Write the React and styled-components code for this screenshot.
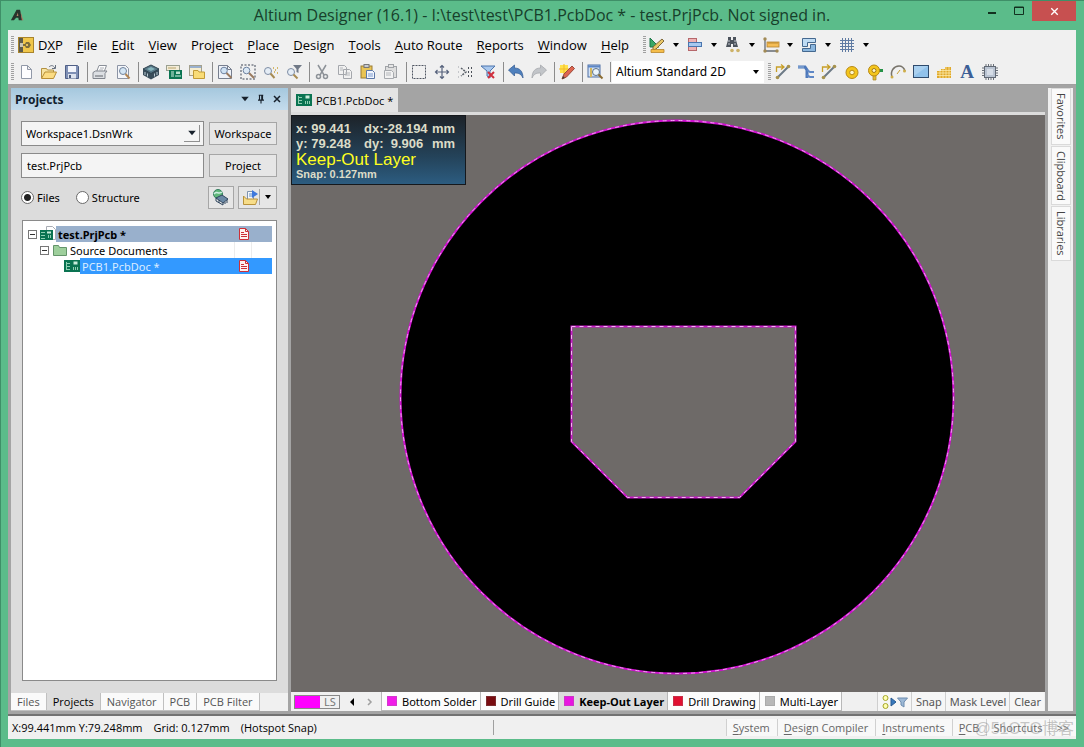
import React, { useState } from "react";
import styled, { createGlobalStyle } from "styled-components";

const ICONS = {
  logo: (
    <>
      <path d="M1 14 7.500 2h4L14 14h-4l-.5-3H7l-2.500 3z" fill="#27332c" />
      <path d="M7.500 9h2L9 5.500z" fill="#b9826a" />
      <path d="M12 4l3 10h-1.500z" fill="#b9705c" />
    </>
  ),
  dxp: (
    <>
      <rect x=".5" y=".5" width="15" height="15" fill="#f0c64a" stroke="#a8842b" />
      <rect x="1" y="1" width="4" height="14" fill="#5d5b4c" />
      <path d="M5 7h2l1-2h3l2 3-2 3H8l-1-2H5z" fill="#7d6d3c" />
      <path d="M2 6h3v4H2z" fill="#c9c5b3" />
      <path d="M8 7h2v2H8z" fill="#e4c25a" />
    </>
  ),
  file: <path d="M3.500 1.500h6l4 4v9h-10zM9.500 1.500v4h4" fill="#fdfdff" stroke="#9199a8" />,
  open: (
    <>
      <path d="M.5 14V4.500h5l1 1.500h6v3" fill="#f6e3a0" stroke="#b39142" />
      <path d="M.5 14.500 4 8h11.500l-3 6.500z" fill="#fbdc83" stroke="#b98f35" />
      <path d="M8 3c2-2 4-2 6 1M14.500 1v3.500H11" fill="none" stroke="#66707f" />
    </>
  ),
  save: (
    <>
      <path d="M1.500 1.500h12l1 1v12h-13z" fill="#7f90b5" stroke="#4f5f86" />
      <rect x="4" y="2" width="8" height="6" fill="#f3f5fb" />
      <rect x="4" y="10" width="8" height="4.500" fill="#dde3ee" />
      <rect x="5" y="11" width="2" height="3" fill="#4d5d80" />
    </>
  ),
  print: (
    <>
      <path d="M4.500 8 7 1.500h7.500L12 8" fill="#fff" stroke="#8a8f98" />
      <path d="M1 8.500 3.500 7h11.500l-2 2.500v5H1z" fill="#dcdfe3" stroke="#80858d" />
      <path d="M3 12h8" stroke="#61656b" />
      <path d="M8 4h4M7 6h4" stroke="#a9adb4" />
    </>
  ),
  preview: (
    <>
      <path d="M2.500 1.500h8l3 3v10h-11z" fill="#f4f6fa" stroke="#8c94a5" />
      <circle cx="8" cy="7" r="3.500" fill="#d4e6f5" stroke="#71839b" />
      <path d="m10.500 10 4 4.500" stroke="#b28654" strokeWidth="2" />
    </>
  ),
  stack: (
    <>
      <path d="M0 5v6l8 4.500L16 11V5z" fill="#3a4d5a" />
      <path d="M8 1 0 5l8 4.500L16 5z" fill="#587887" stroke="#2f434f" />
      <path d="m8 3-4 2 4 2 4-2z" fill="#86b5bd" />
      <path d="M2 8v3M4.500 9.500v3M11.500 9.500v3M14 8v3" stroke="#b9cbd2" />
    </>
  ),
  board: (
    <>
      <rect x=".5" y="1.500" width="13" height="5" fill="#f3ecd7" stroke="#9aa090" />
      <path d="M2 4h8" stroke="#b7a36a" />
      <rect x="3" y="6" width="13" height="9" fill="#0b7553" />
      <path d="M5 8h3M5 10h3M5 12h3M10 13v-2M12 13v-2M14 13v-2" stroke="#d2f0e2" />
      <rect x="10" y="7.500" width="4" height="2.500" fill="#b8e2cf" />
    </>
  ),
  folders: (
    <>
      <rect x=".5" y="1.500" width="12" height="10" fill="#f6edcf" stroke="#a3a08e" />
      <path d="M1 3h11" stroke="#9ab1ce" strokeWidth="2" />
      <path d="M4.500 14.500v-8H9l1 1.500h5.500v6.500z" fill="#f9dc77" stroke="#c29b36" />
    </>
  ),
  fit: (
    <>
      <path d="M1.500 1.500h9l4 4v9h-13z" fill="#eef2f9" stroke="#777f8f" />
      <path d="M10.500 1.500v4h4" fill="none" stroke="#777f8f" />
      <circle cx="7" cy="6.500" r="3.300" fill="#cfe2f4" stroke="#6f83a1" />
      <path d="m9.500 9 5 5" stroke="#9a7b60" strokeWidth="2" />
    </>
  ),
  area: (
    <>
      <rect x="1" y="1" width="14" height="14" fill="none" stroke="#3f4656" strokeDasharray="2 1.500" />
      <circle cx="6.500" cy="6.500" r="3.300" fill="#dbe8f5" stroke="#6f83a1" />
      <path d="m9 9 5 5" stroke="#9a7b60" strokeWidth="2" />
    </>
  ),
  point: (
    <>
      <circle cx="5" cy="7" r="3.500" fill="#e5edf6" stroke="#7d8ca4" />
      <path d="m7.500 9.500 4 4.500" stroke="#a78b52" strokeWidth="2" />
      <path d="M10 4h1M14 4h1M12 6h1M14 9h1M11 8h1" stroke="#c8a23c" strokeWidth="1.500" />
    </>
  ),
  zoomFilter: (
    <>
      <circle cx="5" cy="8" r="3.500" fill="#e5edf6" stroke="#7d8ca4" />
      <path d="m7.500 10.500 4 4" stroke="#a78b52" strokeWidth="2" />
      <path d="M7 1h9l-3.500 4v4l-2-1V5z" fill="#707987" />
    </>
  ),
  cut: (
    <>
      <path d="m4 1 6 10M12 1 6 11" stroke="#8d9298" strokeWidth="1.500" />
      <circle cx="4.500" cy="12.500" r="2" fill="none" stroke="#8d9298" strokeWidth="1.500" />
      <circle cx="11.500" cy="12.500" r="2" fill="none" stroke="#8d9298" strokeWidth="1.500" />
    </>
  ),
  copy: (
    <>
      <path d="M1.500 1.500h6l2 2v7h-8zM6.500 5.500h6l2 2v7h-8z" fill="#f1f1f1" stroke="#a4a7ac" />
      <path d="M3 4h3M3 6h3M8 9h5M8 11h5" stroke="#b4b7bb" />
    </>
  ),
  paste: (
    <>
      <rect x="1" y="2" width="11" height="12" fill="#e9c455" stroke="#9b7c32" />
      <rect x="4" y=".5" width="5" height="3" fill="#c9cbd0" stroke="#777" />
      <path d="M6.500 6.500h6l2 2v6h-8z" fill="#f2f6fd" stroke="#5c78a8" />
      <path d="M8 10h5M8 12h5" stroke="#7c9bcf" />
    </>
  ),
  pasteGrey: (
    <>
      <rect x="2.500" y="2.500" width="11" height="11" fill="#dedede" stroke="#a0a3a7" />
      <rect x="5.500" y=".5" width="5" height="3" fill="#e6e6e6" stroke="#a0a3a7" />
      <path d="M1.500 6.500h7l2 2v6h-9z" fill="#f2f2f2" stroke="#a7aaae" />
      <path d="M3 9h5M3 11h5" stroke="#b4b7bb" />
    </>
  ),
  select: <rect x="1.500" y="1.500" width="13" height="13" fill="none" stroke="#505763" strokeDasharray="2 1" />,
  move: (
    <path
      d="M8 1v14M1 8h14M6 3.500 8 1.500l2 2M6 12.500l2 2 2-2M3.500 6 1.500 8l2 2M12.500 6l2 2-2 2"
      fill="none"
      stroke="#56627c"
      strokeWidth="1.200"
    />
  ),
  deselect: (
    <>
      <path d="M4 4l5 4-5 4" fill="none" stroke="#5a6069" strokeWidth="1.500" strokeDasharray="2 1" />
      <path d="M1 3h1M1 8h1M1 13h1" stroke="#9a9ea5" />
      <path d="M11 4h1M14 4h1M11 8h1M14 8h1M11 12h1M14 12h1" stroke="#4a5058" strokeWidth="2" />
    </>
  ),
  clear: (
    <>
      <path d="M1 2h14l-5 5v7l-3-2V7z" fill="#a9c8ee" stroke="#4d75ad" />
      <path d="m8 8 6 6M14 8l-6 6" stroke="#cf2f3d" strokeWidth="2" />
    </>
  ),
  undo: <path d="M.5 6 6.500 1v3c5 0 8.500 3 8.500 10-2-4-4-5-8.500-5v3z" fill="#4f80bd" stroke="#31588f" strokeWidth=".7" />,
  redo: <path d="M15.500 6 9.500 1v3C4.500 4 1 7 1 14c2-4 4-5 8.500-5v3z" fill="#c2c5c9" stroke="#9fa2a6" strokeWidth=".7" />,
  wand: (
    <>
      <path d="M1 1h8v8H1z" fill="#ffe24a" />
      <path d="M5 0v10M0 5h10" stroke="#f3b928" />
      <path d="m3 15 2-5 8-8 2.500 2.500L7.500 13z" fill="#dd6550" stroke="#9b4c3d" />
      <path d="m3 15 1-3 2 2z" fill="#463b34" />
    </>
  ),
  browse: (
    <>
      <rect x="1" y="1" width="12" height="12" fill="#d3e3f7" stroke="#4e6fa3" />
      <path d="M1 2.500h12" stroke="#5d86c5" strokeWidth="2" />
      <path d="M4 4v9" stroke="#d4b85f" strokeWidth="2" />
      <circle cx="9" cy="8" r="3.500" fill="#eaf4fc" stroke="#5f7286" />
      <path d="m11.500 10.500 4 4" stroke="#8a6b31" strokeWidth="2" />
    </>
  ),
  route: (
    <>
      <path d="M1.500 8V3H8M6 .5 9 3 6 5.500" fill="none" stroke="#c79f27" strokeWidth="1.300" />
      <path d="m2 14 12-12" stroke="#6d7a86" strokeWidth="2" />
      <circle cx="2.500" cy="13.500" r="1.800" fill="#a7934e" />
      <circle cx="13.500" cy="2.500" r="1.800" fill="#a7934e" />
    </>
  ),
  diff: (
    <>
      <path d="M0 3h7l2 3v8" fill="none" stroke="#4d78ba" strokeWidth="3" />
      <path d="M9 6l3 2h4M9 11l3 2h4" fill="none" stroke="#5f88c6" strokeWidth="2" />
      <path d="M0 3h6" stroke="#9ab9df" />
    </>
  ),
  pad: (
    <>
      <circle cx="8" cy="8.500" r="6" fill="#f4c51c" stroke="#b78916" />
      <circle cx="8" cy="8.500" r="2.300" fill="#fff6cb" stroke="#b78916" />
    </>
  ),
  via: (
    <>
      <path d="M6 10h3v6H6z" fill="#e4bd32" stroke="#a98420" strokeWidth=".7" />
      <path d="M11 5h5v3h-5z" fill="#259247" />
      <circle cx="7" cy="6.500" r="5.500" fill="#f4c51c" stroke="#b78916" />
      <circle cx="7" cy="6.500" r="2" fill="#fff6cb" stroke="#a37b12" />
    </>
  ),
  arc: (
    <>
      <path d="M2 13C0 7 4 2 9 2c3 0 5 2 6 5" fill="none" stroke="#77736a" strokeWidth="1.500" />
      <path d="m7 10 3-4" stroke="#c69f36" />
      <circle cx="2" cy="13" r="1.500" fill="#cfae4a" />
      <circle cx="14.500" cy="7" r="1.500" fill="#cfae4a" />
    </>
  ),
  fill: (
    <>
      <rect x=".5" y="1.500" width="15" height="12" fill="#91c2eb" stroke="#2f4b6d" />
      <path d="M1 2h14L1 12z" fill="#a9d0f0" />
    </>
  ),
  polygon: (
    <>
      <path d="M1 7h4V5h4V3h6v11H1z" fill="#e0a92c" />
      <path d="M1 9h14M1 11.500h14M5 6.500h10M4 5v9M7 5v9M10 3v11M13 3v11" stroke="#fff0b6" strokeWidth=".7" />
    </>
  ),
  text: (
    <text x="8" y="14" textAnchor="middle" fontFamily="Liberation Serif, serif" fontSize="19" fontWeight="bold" fill="#3c5f96">
      A
    </text>
  ),
  chip: (
    <>
      <path d="M4 0v16M6.500 0v16M9 0v16M11.500 0v16M0 4h16M0 6.500h16M0 9h16M0 11.500h16" stroke="#6a7079" />
      <rect x="2.500" y="2.500" width="11" height="11" fill="#bac4d2" stroke="#616975" />
      <rect x="5" y="5" width="6" height="6" fill="#d6dde7" />
    </>
  ),
  draft: (
    <>
      <path d="M1 1v9h9z" fill="#3aa767" stroke="#1d7748" />
      <path d="m4 10 9-8 2 2-8 8-3 1z" fill="#e9c767" stroke="#80693a" />
      <path d="M2 12.500h13v3H2z" fill="#f5bd49" stroke="#b6842a" strokeWidth=".8" />
    </>
  ),
  align: (
    <>
      <rect x="1.500" y="1.500" width="8" height="4" fill="#efb2b4" stroke="#b6676b" />
      <rect x="1.500" y="9.500" width="8" height="4" fill="#efb2b4" stroke="#b6676b" />
      <rect x="1.500" y="5.500" width="13" height="4" fill="#a9c9ef" stroke="#4a76af" />
    </>
  ),
  binoculars: (
    <>
      <path d="M3 0h3v3h2V0h3v3l2 7H8V7H6v3H1l2-7z" fill="#4c535c" />
      <path d="M3 4h2M9 4h2M3 7h2M9 7h2" stroke="#c3c9d0" />
      <circle cx="7" cy="13.500" r="1.800" fill="#cdb268" />
      <circle cx="13" cy="13.500" r="1.800" fill="#cdb268" />
    </>
  ),
  dimension: (
    <>
      <path d="M2 2v12h12" fill="none" stroke="#666b72" strokeWidth="1.300" />
      <rect x="4" y="5" width="12" height="5" fill="#f5bd55" stroke="#b5822c" strokeWidth=".8" />
      <path d="M6 5v2M8 5v2M10 5v2M12 5v2M14 5v2" stroke="#a8751f" strokeWidth=".7" />
      <circle cx="2" cy="2" r="1.700" fill="#a18a55" />
      <circle cx="2" cy="14" r="1.700" fill="#a18a55" />
      <circle cx="14" cy="14" r="1.700" fill="#a18a55" />
    </>
  ),
  room: (
    <>
      <path d="M1.500 1.500h13v4h-8v4h-5z" fill="#bfdcf4" stroke="#44688f" />
      <path d="M1.500 11.500v3h13v-7h-5v4z" fill="#8bb7df" stroke="#44688f" />
    </>
  ),
  grid: <path d="M3.500 1v14M6.500 1v14M9.500 1v14M12.500 1v14M1 3.500h14M1 6.500h14M1 9.500h14M1 12.500h14" stroke="#5f7ba3" />,
  pcb: (
    <>
      <rect x="0" y="2" width="16" height="12" fill="#0a7351" />
      <path d="M2.500 4v8M2 5.500h4M2 8.500h4M2 11.500h4M9.500 12V9M11.500 12V9M13.500 12V9" stroke="#8fcfb2" />
      <rect x="9.500" y="3.500" width="4" height="3" fill="#c8ecda" />
    </>
  ),
  project: (
    <>
      <path d="M6.500.5h6l3 3v10h-9z" fill="#fff" stroke="#a8acb4" />
      <rect x="0" y="4" width="13" height="10" fill="#0a7351" />
      <path d="M1 6.500h4M1 9.500h4M1 12.500h4M8.500 12V9M10.500 12V9" stroke="#8fcfb2" />
      <rect x="7" y="5.500" width="4" height="2" fill="#c8ecda" />
    </>
  ),
  folder: <path d="M1.500 13.500v-10h5l1 2h7v8z" fill="#9ecf9c" stroke="#64946a" />,
  doc: (
    <>
      <path d="M3.500 2.500h6l3 3v8h-9z" fill="#fff2f0" stroke="#cc3038" />
      <path d="M9.500 2.500v3h3M5 6.500h3M5 8.500h6M5 10.500h6" fill="none" stroke="#cc3038" />
    </>
  ),
  compile: (
    <>
      <circle cx="5" cy="5" r="4.500" fill="#61b87a" stroke="#367e61" />
      <path d="M1 5c3-4 4 1 8-2" fill="none" stroke="#d1f0e4" strokeWidth="1.500" />
      <path d="m3 9 6-3 6 4-5 4z" fill="#6b89a5" stroke="#31475f" />
      <path d="M3 9v3l7 4v-2M12 13v2M14 11v3M6 11v3" fill="none" stroke="#31475f" />
    </>
  ),
  explore: (
    <>
      <path d="M4.500 12V2.500h6V12" fill="#f6f7fa" stroke="#7e94af" />
      <path d="M6 5h4M6 7h4" stroke="#5c8fcc" />
      <path d="M9 1l6 4-6 4z" fill="#3e78dd" />
      <path d="M.5 15.500V7l3 3h11l-2 5.500z" fill="#f7dd89" stroke="#b8923c" />
    </>
  ),
  down: <path d="M5 6h6l-3 4z" fill="#000" />,
  menuDown: <path d="M3 5h10l-5 6z" fill="#17202b" />,
  pin: <path d="M5 3h6M6 3v6M10 3v6M9 3v6M4 9.500h8M8 10v4" stroke="#17202b" strokeWidth="1.500" />,
  cross: <path d="m4 4 8 8M12 4l-8 8" stroke="#17202b" strokeWidth="2" />,
  whiteCross: <path d="m4 4 8 8M12 4l-8 8" stroke="#fff" strokeWidth="1.700" />,
  minimize: <path d="M4 10h8" stroke="#12301f" strokeWidth="2" />,
  maximize: <path d="M3.500 4h9v7.500h-9zM3 4.500h10" fill="none" stroke="#12301f" />,
  left: <path d="M10 4v8L6 8z" fill="#000" />,
  right: <path d="M7 5l3 3-3 3" fill="none" stroke="#a0a0a0" strokeWidth="1.500" />,
};

const Icon = ({ name, size = 16 }) => (
  <svg width={size} height={size} viewBox="0 0 16 16" aria-hidden="true">
    {ICONS[name]}
  </svg>
);

const MaskGlyph = () => (
  <svg width="26" height="16" viewBox="0 0 26 16" aria-hidden="true">
    <circle cx="3.500" cy="4" r="2.500" fill="#ffffb0" stroke="#a5a52c" />
    <circle cx="3.500" cy="12" r="2.500" fill="#ffffb0" stroke="#a5a52c" />
    <path d="M9 4l5 4-5 4z" fill="#3879bd" stroke="#285b91" />
    <path d="M15.500 4h10l-3.500 4v5l-3-2V8z" fill="#9db9d6" stroke="#6d8caf" />
  </svg>
);

const MENUS = [
  ["", "F", "ile"],
  ["", "E", "dit"],
  ["", "V", "iew"],
  ["Proje", "c", "t"],
  ["", "P", "lace"],
  ["", "D", "esign"],
  ["", "T", "ools"],
  ["", "A", "uto Route"],
  ["", "R", "eports"],
  ["", "W", "indow"],
  ["", "H", "elp"],
];

const DROPDOWNS = ["draft", "align", "binoculars", "dimension", "room", "grid"];

const TOOL_GROUPS = [
  ["file", "open", "save"],
  ["print", "preview"],
  ["stack", "board", "folders"],
  ["fit", "area", "point", "zoomFilter"],
  ["cut", "copy", "paste", "pasteGrey"],
  ["select", "move", "deselect", "clear"],
  ["undo", "redo"],
  ["wand"],
  ["browse"],
];

const PLACE_TOOLS = ["route", "diff", "route", "pad", "via", "arc", "fill", "polygon", "text", "chip"];

const PANEL_TABS = ["Files", "Projects", "Navigator", "PCB", "PCB Filter"];

const LAYERS = [
  { name: "Bottom Solder", color: "#f01ce8" },
  { name: "Drill Guide", color: "#780c10" },
  { name: "Keep-Out Layer", color: "#e815e0" },
  { name: "Drill Drawing", color: "#e01030" },
  { name: "Multi-Layer", color: "#b8b8b8" },
];

const STATUS_MENUS = [
  ["S", "ystem"],
  ["D", "esign Compiler"],
  ["I", "nstruments"],
  ["P", "CB"],
  ["", "Shortcuts"],
  ["", ">>"],
];

const App = () => {
  const [view, setView] = useState("files");
  const [panelTab, setPanelTab] = useState("Projects");
  const [layer, setLayer] = useState("Keep-Out Layer");

  return (
    <Window>
      <GlobalStyle />
      <TitleBar>
        <Logo>
          <Icon name="logo" size={14} />
        </Logo>
        <Title>Altium Designer (16.1) - I:\test\test\PCB1.PcbDoc * - test.PrjPcb. Not signed in.</Title>
        <WindowButtons>
          <WindowButton aria-label="Minimize">
            <Icon name="minimize" />
          </WindowButton>
          <WindowButton aria-label="Maximize">
            <Icon name="maximize" />
          </WindowButton>
          <CloseButton aria-label="Close">
            <Icon name="whiteCross" size={13} />
          </CloseButton>
        </WindowButtons>
      </TitleBar>

      <Client>
        <MenuBar>
          <Grip />
          <DxpButton>
            <Icon name="dxp" />
            <span>
              D<u>X</u>P
            </span>
          </DxpButton>
          <Menus>
            {MENUS.map(([before, key, after]) => (
              <MenuButton key={before + key + after}>
                {before}
                <u>{key}</u>
                {after}
              </MenuButton>
            ))}
          </Menus>
          <Grip />
          {DROPDOWNS.map((name) => (
            <DropButton key={name} aria-label={name}>
              <Icon name={name} />
              <Icon name="down" />
            </DropButton>
          ))}
        </MenuBar>

        <ToolBar>
          <Grip />
          {TOOL_GROUPS.map((group) => (
            <ToolGroup key={group[0]}>
              {group.map((name) => (
                <ToolButton key={name} aria-label={name}>
                  <Icon name={name} />
                </ToolButton>
              ))}
            </ToolGroup>
          ))}
          <ViewSelect>
            <select aria-label="View configuration">
              <option>Altium Standard 2D</option>
            </select>
            <Icon name="down" />
          </ViewSelect>
          <Grip />
          {PLACE_TOOLS.map((name, i) => (
            <ToolButton key={i} aria-label={name}>
              <Icon name={name} />
            </ToolButton>
          ))}
        </ToolBar>

        <Workbench>
          <Panel>
            <PanelHeader>
              <h2>Projects</h2>
              <PanelAction aria-label="Panel menu">
                <Icon name="menuDown" size={12} />
              </PanelAction>
              <PanelAction aria-label="Pin">
                <Icon name="pin" size={12} />
              </PanelAction>
              <PanelAction aria-label="Close panel">
                <Icon name="cross" size={12} />
              </PanelAction>
            </PanelHeader>
            <PanelBody>
              <FieldRow>
                <Combo>
                  <select aria-label="Workspace">
                    <option>Workspace1.DsnWrk</option>
                  </select>
                  <ComboArrow>
                    <Icon name="menuDown" size={12} />
                  </ComboArrow>
                </Combo>
                <PushButton>Workspace</PushButton>
              </FieldRow>
              <FieldRow>
                <TextField aria-label="Project" defaultValue="test.PrjPcb" />
                <PushButton>Project</PushButton>
              </FieldRow>
              <OptionRow>
                <RadioLabel>
                  <input type="radio" name="view" checked={view === "files"} onChange={() => setView("files")} />
                  Files
                </RadioLabel>
                <RadioLabel>
                  <input type="radio" name="view" checked={view === "structure"} onChange={() => setView("structure")} />
                  Structure
                </RadioLabel>
                <OptionButtons>
                  <IconButton aria-label="Compile">
                    <Icon name="compile" />
                  </IconButton>
                  <IconButton aria-label="Explore">
                    <Icon name="explore" />
                    <SplitArrow>
                      <Icon name="down" />
                    </SplitArrow>
                  </IconButton>
                </OptionButtons>
              </OptionRow>
              <Tree>
                <TreeRow $depth={0}>
                  <Expander aria-label="Collapse" />
                  <Icon name="project" />
                  <TreeName $bg="#99b0cc" $bold>
                    test.PrjPcb *
                    <Icon name="doc" />
                  </TreeName>
                </TreeRow>
                <TreeRow $depth={1}>
                  <Expander aria-label="Collapse" />
                  <Icon name="folder" />
                  <TreeName>
                    Source Documents
                    <TreeCell />
                  </TreeName>
                </TreeRow>
                <TreeRow $depth={3}>
                  <Icon name="pcb" />
                  <TreeName $bg="#3399ff" $color="#dcecff">
                    PCB1.PcbDoc *
                    <Icon name="doc" />
                  </TreeName>
                </TreeRow>
              </Tree>
            </PanelBody>
            <PanelTabs>
              {PANEL_TABS.map((name) => (
                <PanelTab key={name} $active={name === panelTab} onClick={() => setPanelTab(name)}>
                  {name}
                </PanelTab>
              ))}
            </PanelTabs>
          </Panel>

          <Editor>
            <DocTabs>
              <DocTab>
                <Icon name="pcb" />
                PCB1.PcbDoc *
              </DocTab>
            </DocTabs>
            <Canvas>
              <Board viewBox="0 0 754 577">
                <circle cx="386" cy="282" r="276.500" fill="#000" stroke="#d010d0" strokeWidth="2" />
                <circle cx="386" cy="282" r="276.500" fill="none" stroke="#f4a4f4" strokeDasharray="4 4" />
                <path d="M280.500 211.500h224v115l-56 56h-112l-56-56z" fill="#6e6a68" stroke="#c818c8" strokeWidth="2" />
                <path d="M280.500 211.500h224v115l-56 56h-112l-56-56z" fill="none" stroke="#f4b4f4" strokeDasharray="4 4" />
              </Board>
              <HeadsUp>
                <Coords>
                  <span>x: 99.441</span>
                  <span>dx:-28.194</span>
                  <span>mm</span>
                  <span>y: 79.248</span>
                  <span>dy:&nbsp; 9.906</span>
                  <span>mm</span>
                </Coords>
                <HudLayer>Keep-Out Layer</HudLayer>
                <HudSnap>Snap: 0.127mm</HudSnap>
              </HeadsUp>
            </Canvas>
            <LayerBar>
              <LayerSet>
                <i />
                LS
              </LayerSet>
              <ScrollButton aria-label="Previous layers">
                <Icon name="left" />
              </ScrollButton>
              <ScrollButton aria-label="Next layers">
                <Icon name="right" />
              </ScrollButton>
              <LayerTabs>
                {LAYERS.map(({ name, color }) => (
                  <LayerTab key={name} $active={name === layer} onClick={() => setLayer(name)}>
                    <Swatch $color={color} />
                    {name}
                  </LayerTab>
                ))}
              </LayerTabs>
              <MaskButton aria-label="Mask">
                <MaskGlyph />
              </MaskButton>
              <MaskButton>Snap</MaskButton>
              <MaskButton>Mask Level</MaskButton>
              <MaskButton>Clear</MaskButton>
            </LayerBar>
          </Editor>

          <SideBar>
            <SideTab>Favorites</SideTab>
            <SideTab>Clipboard</SideTab>
            <SideTab>Libraries</SideTab>
          </SideBar>
        </Workbench>

        <StatusBar>
          <StatusText>
            <span>X:99.441mm Y:79.248mm</span>
            <span>Grid: 0.127mm</span>
            <span>(Hotspot Snap)</span>
          </StatusText>
          <StatusMenus>
            {STATUS_MENUS.map(([key, rest]) => (
              <StatusMenu key={rest}>
                <u>{key}</u>
                {rest}
              </StatusMenu>
            ))}
          </StatusMenus>
          <Watermark>@51CTO博客</Watermark>
        </StatusBar>
      </Client>
    </Window>
  );
};

export default App;

const GlobalStyle = createGlobalStyle`
  * {
    box-sizing: border-box;
  }

  body {
    margin: 0;
    font-family: "Noto Sans", "Open Sans", sans-serif;
    font-size: 12px;
    color: #000;
  }

  button, input, select {
    font: inherit;
    color: inherit;
    margin: 0;
    padding: 0;
    border: 0;
    border-radius: 0;
    background: none;
    white-space: nowrap;
  }

  select {
    appearance: none;
    flex: 1;
    min-width: 0;
    outline: none;
  }

  svg {
    display: block;
    flex: none;
    overflow: visible;
  }

  u {
    text-underline-offset: 2px;
  }
`;

const Window = styled.div`
  display: flex;
  flex-direction: column;
  height: 100vh;
  padding: 0 8px 8px 7px;
  background: #5bbc8a;
  border: solid #3f8f68;
  border-width: 1px 0 0 1px;
`;

const TitleBar = styled.header`
  display: grid;
  grid-template-columns: 1fr auto 1fr;
  height: 29px;
  flex: none;
`;

const Logo = styled.div`
  padding: 7px 0 0 2px;
`;

const Title = styled.h1`
  margin: 0;
  font-family: "Open Sans", sans-serif;
  font-size: 16px;
  font-weight: 400;
  line-height: 29px;
  color: #17402b;
  white-space: nowrap;
`;

const WindowButtons = styled.div`
  display: flex;
  justify-content: flex-end;
  align-items: flex-start;
`;

const WindowButton = styled.button`
  display: flex;
  align-items: center;
  justify-content: center;
  width: 27px;
  height: 20px;
`;

const CloseButton = styled(WindowButton)`
  width: 44px;
  background: #c75050;
`;

const Client = styled.div`
  display: flex;
  flex: 1;
  flex-direction: column;
  min-height: 0;
  background: #f0f0f0;
`;

const MenuBar = styled.nav`
  display: flex;
  align-items: center;
  height: 29px;
  padding-left: 3px;
  font-family: "Open Sans", sans-serif;
  font-size: 13px;
`;

const ToolBar = styled.div`
  display: flex;
  align-items: center;
  height: 26px;
  padding-left: 3px;
  border-bottom: 1px solid #a0a0a0;
`;

const Grip = styled.span`
  flex: none;
  width: 3px;
  height: 17px;
  background: repeating-linear-gradient(#a0a0a0 0 1px, transparent 1px 2px);
`;

const DxpButton = styled.button`
  display: flex;
  align-items: center;
  gap: 4px;
  padding: 0 14px 0 4px;
`;

const Menus = styled.div`
  display: flex;
  gap: 14px;
  padding-right: 14px;
`;

const MenuButton = styled.button`
  line-height: 20px;
`;

const DropButton = styled.button`
  display: flex;
  align-items: center;
  gap: 3px;
  width: 38px;
  padding-left: 3px;
`;

const ToolGroup = styled.div`
  display: flex;
  padding-right: 5px;
  background: linear-gradient(#8c8c8c, #8c8c8c) right / 1px 20px no-repeat;
`;

const ToolButton = styled.button`
  display: flex;
  align-items: center;
  justify-content: center;
  width: 23px;
  height: 22px;
`;

const ViewSelect = styled.div`
  display: flex;
  align-items: center;
  width: 152px;
  height: 22px;
  margin: 0 4px 0 1px;
  padding-left: 4px;
  background: #fff;
`;

const Workbench = styled.main`
  display: flex;
  flex: 1;
  min-height: 0;
  gap: 3px;
  padding: 3px;
  background: #a4a4a4;
  border-bottom: 2px solid #727272;
`;

const Panel = styled.section`
  display: flex;
  flex-direction: column;
  flex: none;
  width: 277px;
  background: #dcdcdc;
`;

const PanelHeader = styled.header`
  display: flex;
  align-items: center;
  height: 22px;
  padding: 0 3px 0 4px;
  background: linear-gradient(#a5c8de, #c4dbec);

  h2 {
    flex: 1;
    margin: 0;
    font-family: "Open Sans", sans-serif;
    font-size: 12px;
    color: #10202e;
  }
`;

const PanelAction = styled.button`
  display: flex;
  justify-content: center;
  width: 16px;
`;

const PanelBody = styled.div`
  display: flex;
  flex: 1;
  flex-direction: column;
  gap: 7px;
  min-height: 0;
  padding: 11px 11px 12px 10px;
`;

const FieldRow = styled.div`
  display: grid;
  grid-template-columns: 1fr 68px;
  gap: 5px;
  align-items: center;
  font-size: 11px;
`;

const Combo = styled.div`
  display: flex;
  align-items: center;
  height: 25px;
  padding-left: 4px;
  background: #f4f4f4;
  border: 1px solid #8a8a8a;
`;

const ComboArrow = styled.span`
  display: flex;
  align-items: center;
  justify-content: center;
  width: 16px;
  height: 17px;
  margin-right: 3px;
  border: solid #909090;
  border-width: 0 1px 1px 0;
  pointer-events: none;
`;

const TextField = styled.input`
  width: 100%;
  height: 25px;
  padding-left: 5px;
  background: #f4f4f4;
  border: 1px solid #8a8a8a;
`;

const PushButton = styled.button`
  height: 23px;
  background: #e6e6e6;
  border: 1px solid #a6a6a6;
`;

const OptionRow = styled.div`
  display: flex;
  align-items: center;
  gap: 16px;
  height: 24px;
  font-size: 11px;
`;

const RadioLabel = styled.label`
  display: flex;
  align-items: center;
  gap: 3px;

  input {
    appearance: none;
    width: 13px;
    height: 13px;
    background: #fff;
    border: 1px solid #6a6a6a;
    border-radius: 50%;
  }

  input:checked {
    background: radial-gradient(circle, #222 3px, #fff 4px);
  }
`;

const OptionButtons = styled.div`
  display: flex;
  gap: 4px;
  margin-left: auto;
`;

const IconButton = styled.button`
  display: flex;
  align-items: center;
  height: 23px;
  padding-left: 4px;
  min-width: 26px;
  background: #e6e6e6;
  border: 1px solid #a6a6a6;
`;

const SplitArrow = styled.span`
  border-left: 1px solid #a6a6a6;
`;

const Tree = styled.div`
  flex: 1;
  padding: 5px 4px 4px 5px;
  margin: 4px 0 0 1px;
  background: #fff;
  border: 1px solid #8a8a8a;
`;

const TreeRow = styled.div`
  display: flex;
  align-items: center;
  height: 16px;
  padding-left: ${({ $depth }) => $depth * 12}px;
`;

const Expander = styled.button`
  flex: none;
  width: 9px;
  height: 9px;
  margin-right: 3px;
  background: linear-gradient(#333, #333) center / 5px 1px no-repeat #fff;
  border: 1px solid #777;
`;

const TreeName = styled.span`
  display: flex;
  flex: 1;
  align-items: center;
  justify-content: space-between;
  height: 16px;
  padding: 0 20px 0 2px;
  font-size: 11px;
  font-weight: ${({ $bold }) => ($bold ? 700 : 400)};
  color: ${({ $color }) => $color || "#000"};
  background: ${({ $bg }) => $bg || "#fff"};
`;

const TreeCell = styled.span`
  width: 18px;
  height: 16px;
  border: solid #ececec;
  border-width: 0 1px;
`;

const PanelTabs = styled.div`
  display: flex;
  height: 18px;
  background: #f0f0f0;
`;

const PanelTab = styled.button`
  padding: 0 6px;
  font-family: "Open Sans", sans-serif;
  font-size: 11px;
  color: ${({ $active }) => ($active ? "#000" : "#555")};
  background: ${({ $active }) => ($active ? "#dcdcdc" : "#fafafa")};
  border: solid #c0c0c0;
  border-width: 0 1px 1px 0;
`;

const Editor = styled.section`
  display: flex;
  flex: 1;
  flex-direction: column;
  min-width: 0;
`;

const DocTabs = styled.div`
  display: flex;
  height: 27px;
  border-bottom: 3px solid #dcdcdc;
`;

const DocTab = styled.button`
  display: flex;
  align-items: center;
  gap: 4px;
  padding: 0 5px;
  font-family: "Open Sans", sans-serif;
  font-size: 11px;
  background: #e4e4e4;
`;

const Canvas = styled.div`
  position: relative;
  flex: 1;
  min-height: 0;
  background: #6e6a68;
`;

const Board = styled.svg`
  width: 100%;
  height: 100%;
`;

const HeadsUp = styled.div`
  position: absolute;
  top: 0;
  left: 0;
  width: 175px;
  padding: 5px 4px 3px;
  font-family: "Liberation Sans", sans-serif;
  font-weight: 700;
  color: #dcdcc8;
  background: linear-gradient(#1d2329, #24435a 60%, #2c5c80);
  border: 1px solid #15181c;
`;

const Coords = styled.div`
  display: grid;
  grid-template-columns: 68px 68px auto;
  font-size: 13px;
  line-height: 15px;
`;

const HudLayer = styled.div`
  font-size: 17px;
  font-weight: 400;
  line-height: 17px;
  color: #ffff20;
`;

const HudSnap = styled.div`
  font-size: 11px;
  line-height: 13px;
`;

const LayerBar = styled.div`
  display: flex;
  align-items: center;
  height: 19px;
  padding: 0 1px 0 3px;
  font-size: 11px;
  background: #f0f0f0;
`;

const LayerSet = styled.button`
  display: flex;
  align-items: center;
  gap: 4px;
  width: 46px;
  height: 14px;
  color: #777;
  border: 1px solid #888;

  i {
    width: 25px;
    height: 12px;
    background: #ff00ff;
  }
`;

const ScrollButton = styled.button`
  margin-left: 4px;
  & + & {
    margin-left: 1px;
  }
`;

const LayerTabs = styled.div`
  display: flex;
  flex: 1;
  align-self: stretch;
  margin-left: 4px;
  border-left: 1px solid #b8b8b8;
`;

const LayerTab = styled.button`
  display: flex;
  align-items: center;
  gap: 5px;
  height: 19px;
  padding: 0 3px 0 5px;
  font-family: ${({ $active }) => ($active ? '"Open Sans", sans-serif' : "inherit")};
  font-weight: ${({ $active }) => ($active ? 700 : 400)};
  background: ${({ $active }) => ($active ? "#dcdcdc" : "#fcfcfc")};
  border: solid #b8b8b8;
  border-width: 0 1px 1px 0;
`;

const Swatch = styled.span`
  width: 10px;
  height: 10px;
  background: ${({ $color }) => $color};
  border: 1px solid #8884;
`;

const MaskButton = styled.button`
  display: flex;
  align-items: center;
  height: 19px;
  padding: 0 3px 0 4px;
  color: #555;
  background: #f6f6f6;
  border: solid #cfcfcf;
  border-width: 0 0 0 1px;
`;

const SideBar = styled.aside`
  display: flex;
  flex-direction: column;
  gap: 1px;
  width: 25px;
  padding: 0 2px 0 3px;
  background: #f0f0f0;
`;

const SideTab = styled.button`
  padding: 4px 0;
  writing-mode: vertical-rl;
  font-family: "Open Sans", sans-serif;
  font-size: 11px;
  line-height: 18px;
  color: #444;
  background: #fafafa;
  border: 1px solid #dadada;
`;

const StatusBar = styled.footer`
  position: relative;
  display: flex;
  align-items: center;
  height: 23px;
  font-family: "Open Sans", sans-serif;
  font-size: 11px;
`;

const StatusText = styled.div`
  display: flex;
  flex: none;
  gap: 11px;
  width: 486px;
  padding-left: 4px;
  border-right: 1px solid #a0a0a0;
`;

const StatusMenus = styled.div`
  display: flex;
  margin-left: auto;
  background: #f8f8f8;
`;

const StatusMenu = styled.button`
  height: 17px;
  padding: 0 7px 0 6px;
  color: #666;
  border-left: 1px solid #d0d0d0;
`;

const Watermark = styled.span`
  position: absolute;
  right: 2px;
  bottom: 0;
  font-family: "Liberation Sans", "Noto Sans CJK SC", sans-serif;
  font-size: 16px;
  color: #9998;
  pointer-events: none;
`;
